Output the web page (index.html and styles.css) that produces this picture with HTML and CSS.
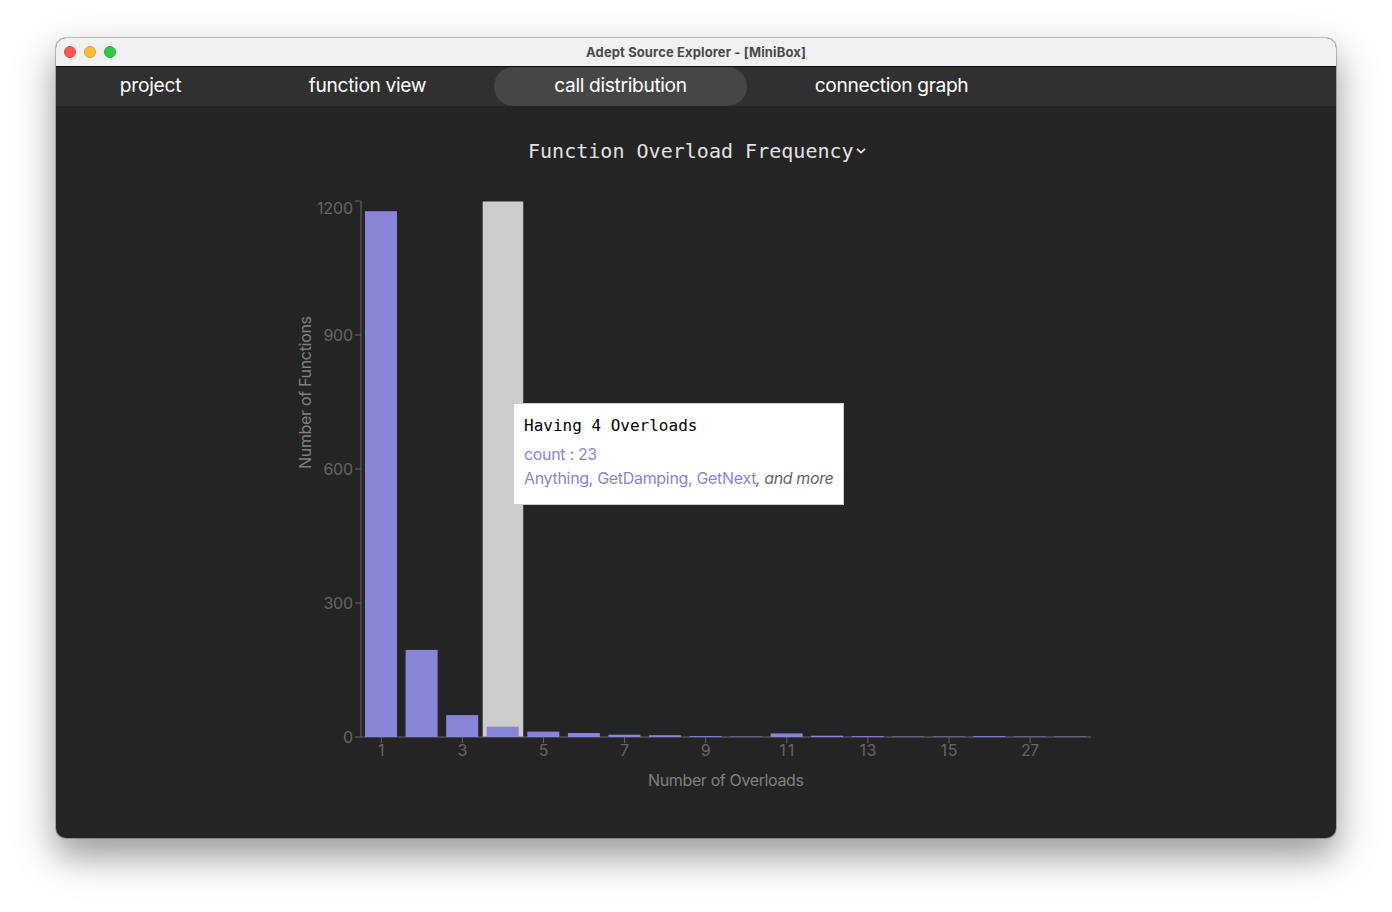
FILE: index.html
```
<!DOCTYPE html>
<html lang="en">
<head>
<meta charset="utf-8">
<title>Adept Source Explorer</title>
<link rel="stylesheet" href="styles.css">
</head>
<body>
<div class="window">
  <header class="titlebar">
    <div class="lights"><i class="light red"></i><i class="light yellow"></i><i class="light green"></i></div>
    <div class="title"><span>Adept Source Explorer - [MiniBox]</span></div>
  </header>
  <nav class="tabs">
    <a class="tab tab-project"><span>project</span></a>
    <a class="tab tab-function"><span>function view</span></a>
    <a class="tab tab-call active"><span>call distribution</span></a>
    <a class="tab tab-graph"><span>connection graph</span></a>
  </nav>
  <main class="content">
    <div class="selector"><span>Function Overload Frequency</span><svg class="chevron" width="10" height="6" viewBox="0 0 10 6"><path d="M1 .9 5 4.7 9 .9"/></svg></div>
    <div class="chart">
      <svg class="plot" width="820" height="610" viewBox="290 190 820 610">
        <rect class="cursor" x="482.67" y="201.5" width="40.56" height="535.5"/>
        <g class="axis">
          <path d="M361 201V737M355 201H361M355 335H361M355 469H361M355 603H361M355 737H1091"/>
          <path d="M381.3 737v6M462.4 737v6M543.5 737v6M624.6 737v6M705.7 737v6M786.8 737v6M867.9 737v6M949 737v6M1030.1 737v6"/>
        </g>
        <g class="bars">
          <rect x="365" y="211.2" width="32" height="525.8"/>
          <rect x="405.6" y="649.9" width="32" height="87.1"/>
          <rect x="446.2" y="715.1" width="32" height="21.9"/>
          <rect x="486.7" y="726.7" width="32" height="10.3"/>
          <rect x="527.3" y="731.6" width="32" height="5.4"/>
          <rect x="567.9" y="733" width="32" height="4"/>
          <rect x="608.4" y="734.7" width="32" height="2.3"/>
          <rect x="648.9" y="735.2" width="32" height="1.8"/>
          <rect x="689.5" y="736.1" width="32" height=".9"/>
          <rect x="730" y="736.55" width="32" height=".45"/>
          <rect x="770.6" y="733.4" width="32" height="3.6"/>
          <rect x="811.1" y="735.7" width="32" height="1.3"/>
          <rect x="851.7" y="736.1" width="32" height=".9"/>
          <rect x="892.2" y="736.55" width="32" height=".45"/>
          <rect x="932.8" y="736.55" width="32" height=".45"/>
          <rect x="973.3" y="736.1" width="32" height=".9"/>
          <rect x="1013.9" y="736.55" width="32" height=".45"/>
          <rect x="1054.4" y="736.55" width="32" height=".45"/>
        </g>
        <g class="ticks ticks-y">
          <text x="353" y="213.7" textLength="36">1200</text>
          <text x="353" y="340.7" textLength="29.5">900</text>
          <text x="353" y="474.7" textLength="29.5">600</text>
          <text x="353" y="608.7" textLength="29.5">300</text>
          <text x="353" y="742.7">0</text>
        </g>
        <g class="ticks ticks-x">
          <text x="381.3" y="755.7">1</text>
          <text x="462.4" y="755.7">3</text>
          <text x="543.5" y="755.7">5</text>
          <text x="624.6" y="755.7">7</text>
          <text x="705.7" y="755.7">9</text>
          <text x="786.8" y="755.7" textLength="15">11</text>
          <text x="867.9" y="755.7" textLength="17">13</text>
          <text x="949" y="755.7" textLength="17">15</text>
          <text x="1030.1" y="755.7" textLength="18">27</text>
        </g>
        <g class="labels">
          <text x="726" y="785.8" textLength="156">Number of Overloads</text>
          <text transform="translate(310.5 392.5) rotate(-90)" textLength="153">Number of Functions</text>
        </g>
      </svg>
      <div class="tooltip">
        <p class="tip-title">Having 4 Overloads</p>
        <p class="tip-count"><span>count : 23</span></p>
        <p class="tip-names"><span>Anything, GetDamping, GetNext</span><em>, and more</em></p>
      </div>
    </div>
  </main>
</div>
</body>
</html>
```
FILE: styles.css
```
body {
  margin: 0;
  height: 912px;
  overflow: hidden;
  background: #fff;
  font-family: Inter, "Liberation Sans", sans-serif;
}
.window {
  width: 1280px;
  height: 800px;
  margin: 38px 56px 0;
  display: flex;
  flex-direction: column;
  border-radius: 10px;
  overflow: hidden;
  background: #242424;
  box-shadow: 0 0 0 1px rgba(0, 0, 0, .22), 0 18px 30px rgba(0, 0, 0, .25), 0 16px 50px rgba(0, 0, 0, .2);
}
.titlebar {
  box-sizing: border-box;
  height: 29px;
  display: grid;
  grid-template-columns: 100px 1fr 100px;
  align-items: center;
  background: #f1f1f1;
  border-bottom: 1px solid #0b0b0b;
}
.lights { display: flex; gap: 8px; padding-left: 8px; }
.light { box-sizing: border-box; width: 12px; height: 12px; border-radius: 50%; border: 1px solid; }
.red { background: #ff5b54; border-color: #e2463f; }
.yellow { background: #fdbc3c; border-color: #dfa032; }
.green { background: #34c84a; border-color: #26ab36; }
.title {
  text-align: center;
  font-size: 13px;
  font-weight: 700;
  letter-spacing: .12px;
  color: #4a4a4a;
  white-space: nowrap;
}
.tabs {
  display: flex;
  gap: 8px;
  height: 39px;
  padding: 0 4px;
  background: #303030;
}
.tab {
  display: flex;
  justify-content: center;
  border-radius: 20px;
  color: #fff;
  font-size: 19.2px;
  letter-spacing: -.35px;
  line-height: 37px;
  white-space: nowrap;
}
.tab-project { width: 181px; letter-spacing: -.25px; }
.tab-function { width: 237px; }
.tab-call { width: 253px; }
.tab-graph { width: 273px; }
.active { background: #464646; }
.content { flex: 1; display: flex; flex-direction: column; }
.selector {
  box-sizing: border-box;
  height: 60px;
  padding: 30px 0 0 472px;
  display: flex;
  align-items: center;
  line-height: 30px;
  font-family: "DejaVu Sans Mono", monospace;
  font-size: 20px;
  letter-spacing: .02px;
  color: #e2e2e2;
}
.chevron { margin-left: 2px; }
.chevron path { fill: none; stroke: #eee; stroke-width: 1.7; }
.chart { position: relative; margin: 24px 0 0 234px; width: 820px; height: 610px; }
.plot { display: block; }
.plot text { font-size: 16px; }
.cursor { fill: #ccc; }
.bars { fill: #8884d8; }
.axis path { fill: none; stroke: #666; stroke-width: 1; }
.ticks { fill: #666; }
.ticks-y { text-anchor: end; }
.ticks-x { text-anchor: middle; }
.labels { fill: #808080; text-anchor: middle; }
.tooltip {
  position: absolute;
  left: 223px;
  top: 213px;
  width: 331px;
  height: 102px;
  box-sizing: border-box;
  padding: 10px;
  background: #fff;
  border: 1px solid #ccc;
  font-size: 16px;
  line-height: 24px;
  white-space: nowrap;
}
.tooltip p { margin: 0; }
.tooltip .tip-title { font-family: "DejaVu Sans Mono", monospace; color: #000; margin-bottom: 4px; }
.tip-count, .tip-names { color: #8884d8; letter-spacing: -.32px; }
.tip-names em { color: #666; letter-spacing: -.4px; }
```
